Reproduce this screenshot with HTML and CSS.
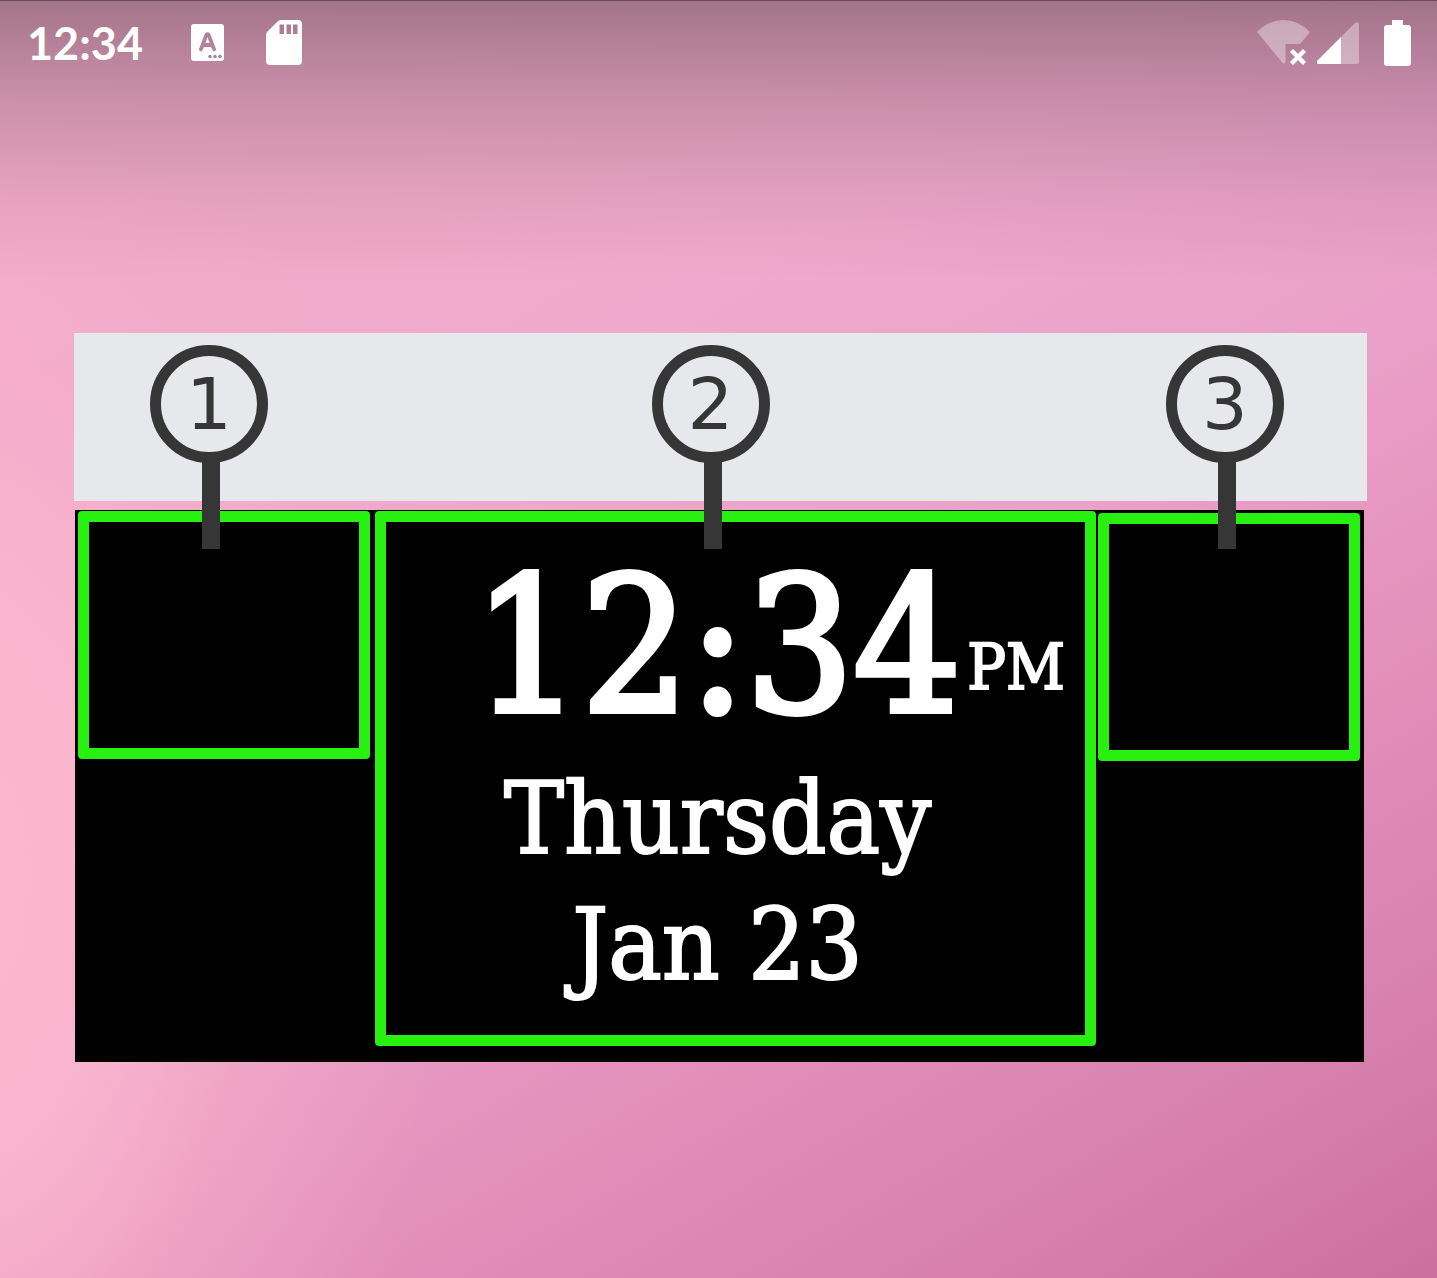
FILE: index.html
```
<!DOCTYPE html>
<html lang="en">
<head>
<meta charset="utf-8">
<meta name="viewport" content="width=device-width, initial-scale=1">
<title>Clock widget</title>
<link rel="stylesheet" href="styles.css">
</head>
<body>
<header class="status">
  <time class="status-time">12:34</time>
  <svg class="icon-keyboard" width="33" height="37" viewBox="0 0 33 37" aria-hidden="true">
    <path fill="#fff" fill-rule="evenodd" d="M3 0H30Q33 0 33 3V34Q33 37 30 37H3Q0 37 0 34V3Q0 0 3 0ZM14 9.500Q16.500 7 19 9.500L25 25Q25 28 22 27L20 23H13L11 27Q8 28 8 25ZM14.500 19H18.500L16.500 13Z"/>
    <g class="hole"><circle cx="19" cy="32.500" r="1.700"/><circle cx="24" cy="32.500" r="1.700"/><circle cx="29" cy="32.500" r="1.700"/></g>
  </svg>
  <svg class="icon-card" width="36" height="45" viewBox="0 0 36 45" aria-hidden="true">
    <path fill="#fff" fill-rule="evenodd" d="M15 0H32Q36 0 36 4V41Q36 45 32 45H4Q0 45 0 41V15Q0 13 2 11L11 2Q13 0 15 0ZM13.500 4.500V14H18V4.500ZM20.500 4.500V14H25V4.500ZM27 4.500V14H31.500V4.500Z"/>
  </svg>
  <svg class="icon-wifi" width="53" height="46" viewBox="0 0 53 46" aria-hidden="true">
    <path fill="#fff" fill-opacity=".36" d="M0 12Q12 0 26.500 0T53 12L43 24H28.500V42L26.500 44Z"/>
    <path stroke="#fff" stroke-width="4.500" d="M34.500 30.500L47.500 43.500M47.500 30.500L34.500 43.500"/>
  </svg>
  <svg class="icon-signal" width="42" height="42" viewBox="0 0 42 42" aria-hidden="true">
    <path fill="#fff" fill-opacity=".36" d="M24 15L38 1Q42-1 42 3V40Q42 42 40 42H24Z"/>
    <path fill="#fff" d="M24 15V42H2Q-1 42 0 39Z"/>
  </svg>
  <svg class="icon-battery" width="27" height="46" viewBox="0 0 27 46" aria-hidden="true">
    <path fill="#fff" d="M8 0H19V5H24Q27 5 27 8V43Q27 46 24 46H3Q0 46 0 43V8Q0 5 3 5H8Z"/>
  </svg>
</header>
<main class="home">
  <section class="legend" aria-label="Widget areas">
    <div class="pin pin-left"><span class="pin-number">1</span></div>
    <div class="pin pin-middle"><span class="pin-number">2</span></div>
    <div class="pin pin-right"><span class="pin-number">3</span></div>
  </section>
  <section class="widget" aria-label="Clock">
    <div class="area area-left"></div>
    <div class="area area-clock">
      <div class="clock-row"><time class="clock-time">12:34</time><span class="clock-period">PM</span></div>
      <div class="clock-date">Thursday</div>
      <div class="clock-date">Jan 23</div>
    </div>
    <div class="area area-right"></div>
  </section>
</main>
</body>
</html>
```
FILE: styles.css
```
* {
  box-sizing: border-box;
}

body {
  margin: 0;
  min-height: 100vh;
  border-top: 1px solid #6b4a5c;
  color: #fff;
  background:
    linear-gradient(180deg, rgba(45, 35, 40, 0.4) 0, rgba(50, 35, 45, 0.22) 90px, rgba(50, 35, 45, 0.08) 190px, transparent 280px),
    radial-gradient(ellipse 480px 900px at -40px 900px, #fcb8ce 0, rgba(252, 184, 206, 0.85) 30%, rgba(250, 176, 202, 0.4) 60%, rgba(248, 170, 200, 0) 100%),
    linear-gradient(150deg, #f2acc9 0%, #f0a9cc 33%, #eaa0c8 54%, #e390bb 69%, #d983b0 84%, #d47aa8 92%, #cc6f9e 100%);
}

.status {
  display: flex;
  align-items: center;
  height: 83px;
  padding: 0 26px 0 27px;
}

.status-time {
  margin-right: 48px;
  font: 700 45px/56px Lato, sans-serif;
}

.icon-card {
  margin-left: 42px;
}

.icon-wifi {
  margin-left: auto;
}

.icon-signal {
  margin-left: 7px;
}

.icon-battery {
  margin-left: 25px;
}

.hole {
  fill: #ae7e96;
}

.home {
  padding: 249px 70px 32px 74px;
}

.legend {
  position: relative;
  z-index: 1;
  height: 168px;
  background: #e7e8ec;
}

.pin {
  position: absolute;
  top: 12px;
  width: 118px;
  height: 204px;
}

.pin::after {
  content: "";
  position: absolute;
  top: 112px;
  bottom: 0;
  left: 52px;
  width: 18px;
  background: #363636;
}

.pin-left {
  left: 76px;
}

.pin-middle {
  left: calc(50% - 69px);
}

.pin-right {
  right: 83px;
}

.pin-number {
  display: block;
  height: 118px;
  border: 11px solid #363636;
  border-radius: 50%;
  color: #363636;
  font: 72px/96px "DejaVu Sans", sans-serif;
  text-align: center;
}

.widget {
  display: grid;
  grid-template-columns: 295fr 721fr 262fr;
  align-items: start;
  column-gap: 2px;
  margin: 9px 3px 0 1px;
  padding: 1px 4px 16px 3px;
  background: #000;
}

.area {
  min-width: 0;
  min-height: 248px;
  border: 11px solid #28f010;
  border-radius: 4px;
}

.area-left {
  margin-right: 3px;
}

.area-right {
  margin-top: 2px;
}

.area-clock {
  min-height: 535px;
  padding: 14px 36px 0 0;
  font-family: "DejaVu Serif Condensed", "DejaVu Serif", serif;
  font-stretch: condensed;
  text-align: center;
  -webkit-text-stroke: 2px #fff;
}

.clock-row {
  display: grid;
  grid-template-columns: minmax(0, 1fr) auto minmax(0, 1fr);
  align-items: end;
}

.clock-time {
  grid-column: 2;
  font-size: 188px;
  line-height: 220px;
  -webkit-text-stroke-width: 6px;
}

.clock-period {
  padding: 0 0 49px 6px;
  font-size: 64px;
  line-height: 80px;
  text-align: left;
}

.clock-date {
  font-size: 100px;
  line-height: 126px;
}
```
